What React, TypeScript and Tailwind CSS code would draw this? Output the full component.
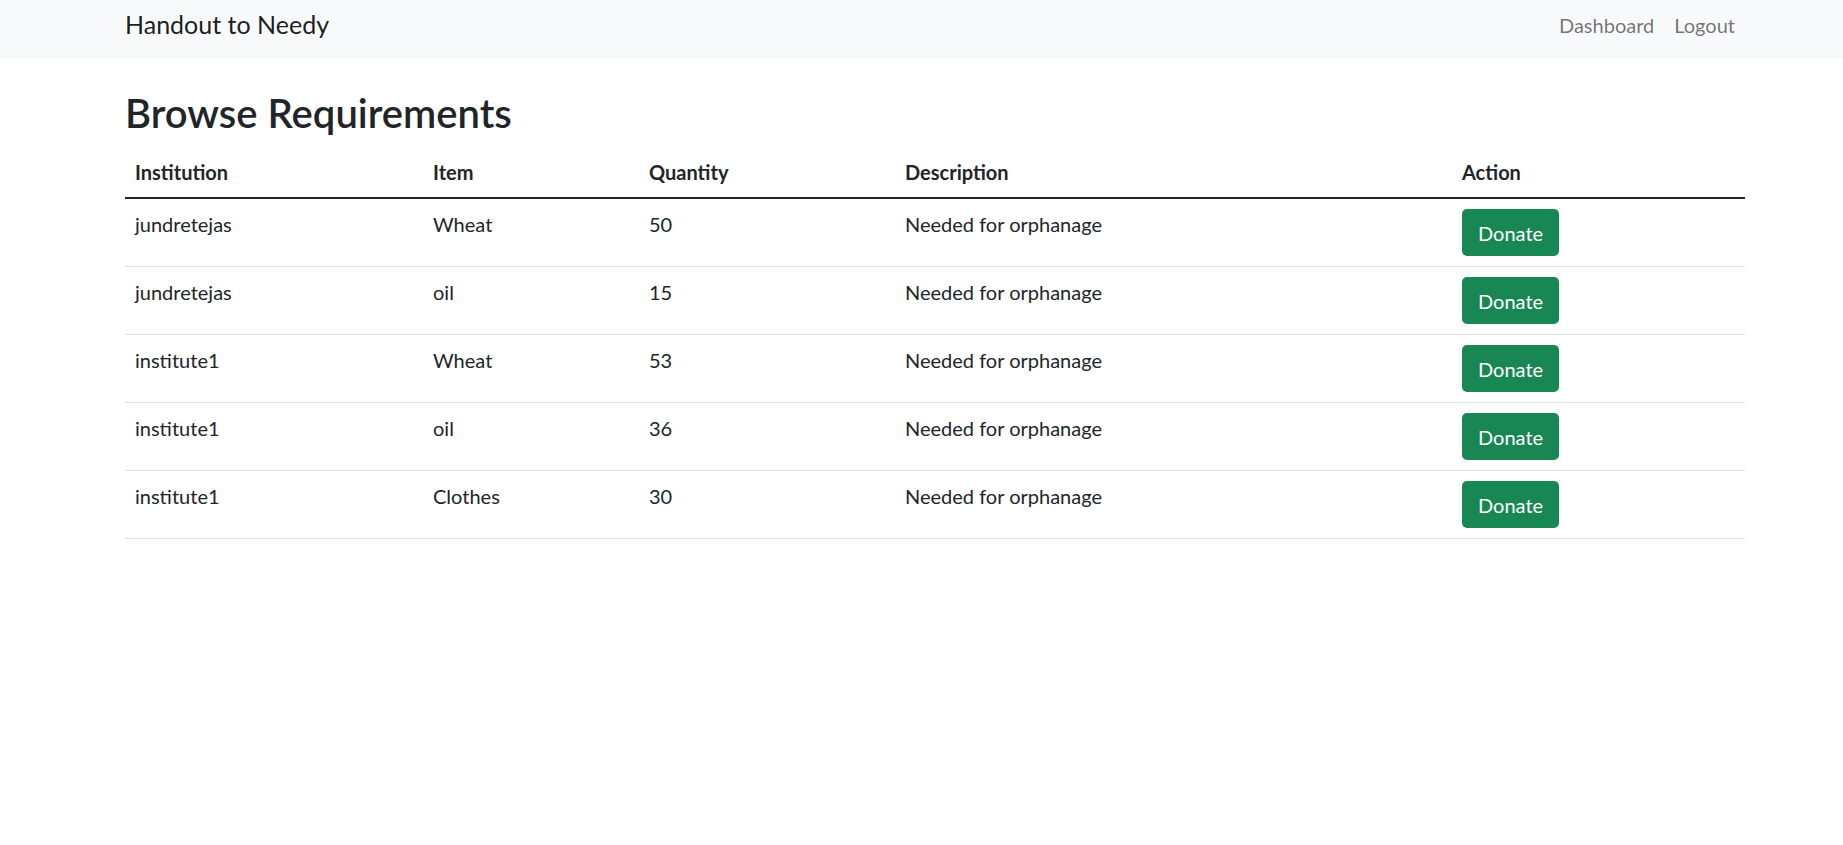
import React from 'react'

const rows = [
  { institution: 'jundretejas', item: 'Wheat', quantity: 50, description: 'Needed for orphanage' },
  { institution: 'jundretejas', item: 'oil', quantity: 15, description: 'Needed for orphanage' },
  { institution: 'institute1', item: 'Wheat', quantity: 53, description: 'Needed for orphanage' },
  { institution: 'institute1', item: 'oil', quantity: 36, description: 'Needed for orphanage' },
  { institution: 'institute1', item: 'Clothes', quantity: 30, description: 'Needed for orphanage' },
]

const App = () => {
  return (
    <div className="min-h-screen bg-white text-[#212529] font-['Lato',sans-serif]">
      <nav className="bg-[#f8f9fa] h-[59px]">
        <div className="flex items-start justify-between h-full pl-[125px] pr-[98px]">
          <a href="#" className="mt-[6px] text-[25px] leading-[37px] text-black/90">
            Handout to Needy
          </a>
          <ul className="flex items-center mt-[10px]">
            <li>
              <a href="#" className="block px-[10px] text-[20px] leading-[30px] text-black/55">
                Dashboard
              </a>
            </li>
            <li>
              <a href="#" className="block px-[10px] text-[20px] leading-[30px] text-black/55">
                Logout
              </a>
            </li>
          </ul>
        </div>
      </nav>

      <div className="pl-[125px] pr-[98px] pt-[30px]">
        <h2 className="text-[40px] leading-[48px] font-semibold mb-[10px]">Browse Requirements</h2>
        <table className="w-full table-fixed border-collapse text-[20px] leading-[30px]">
          <colgroup>
            <col className="w-[298px]" />
            <col className="w-[216px]" />
            <col className="w-[256px]" />
            <col className="w-[557px]" />
            <col className="w-[293px]" />
          </colgroup>
          <thead>
            <tr className="border-b-2 border-[#212529]">
              <th className="text-left font-bold p-[10px]">Institution</th>
              <th className="text-left font-bold p-[10px]">Item</th>
              <th className="text-left font-bold p-[10px]">Quantity</th>
              <th className="text-left font-bold p-[10px]">Description</th>
              <th className="text-left font-bold p-[10px]">Action</th>
            </tr>
          </thead>
          <tbody>
            {rows.map((r, i) => (
              <tr key={i} className="border-b border-[#dee2e6] align-top">
                <td className="p-[10px]">{r.institution}</td>
                <td className="p-[10px]">{r.item}</td>
                <td className="p-[10px]">{r.quantity}</td>
                <td className="p-[10px]">{r.description}</td>
                <td className="p-[10px]">
                  <button className="h-[47px] px-[16px] rounded-[5px] bg-[#198754] text-white text-[20px] leading-[30px]">
                    Donate
                  </button>
                </td>
              </tr>
            ))}
          </tbody>
        </table>
      </div>
    </div>
  )
}

export default App
